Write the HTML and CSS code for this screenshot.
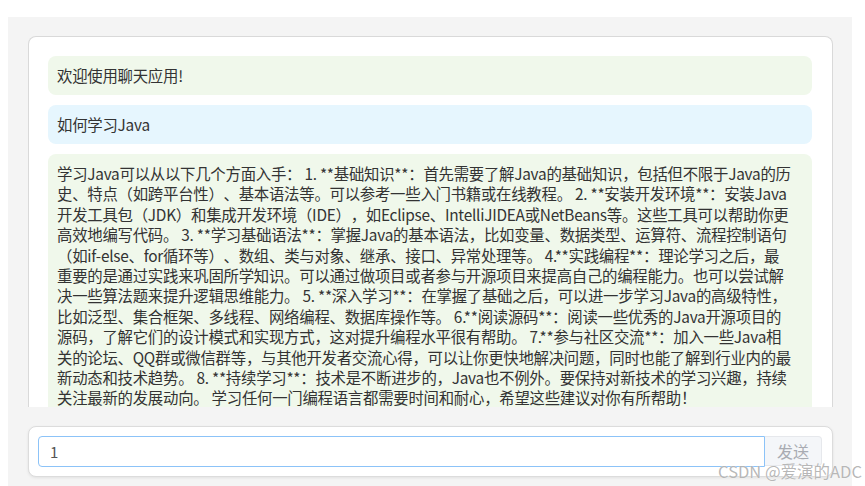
FILE: index.html
```html
<!DOCTYPE html>
<html lang="zh-CN">
<head>
    <meta charset="UTF-8">
    <meta name="viewport" content="width=device-width, initial-scale=1.0">
    <title>聊天应用</title>
    <link rel="stylesheet" href="styles.css">
</head>
<body>
    <div class="app">
        <div class="chat-box">
            <div class="message bot">欢迎使用聊天应用!</div>
            <div class="message user">如何学习Java</div>
            <div class="message bot reply">学习Java可以从以下几个方面入手： 1. **基础知识**：首先需要了解Java的基础知识，包括但不限于Java的历<br>史、特点（如跨平台性）、基本语法等。可以参考一些入门书籍或在线教程。 2. **安装开发环境**：安装Java<br>开发工具包（JDK）和集成开发环境（IDE），如Eclipse、IntelliJIDEA或NetBeans等。这些工具可以帮助你更<br>高效地编写代码。 3. **学习基础语法**：掌握Java的基本语法，比如变量、数据类型、运算符、流程控制语句<br>（如if-else、for循环等）、数组、类与对象、继承、接口、异常处理等。 4.**实践编程**：理论学习之后，最<br>重要的是通过实践来巩固所学知识。可以通过做项目或者参与开源项目来提高自己的编程能力。也可以尝试解<br>决一些算法题来提升逻辑思维能力。 5. **深入学习**：在掌握了基础之后，可以进一步学习Java的高级特性，<br>比如泛型、集合框架、多线程、网络编程、数据库操作等。 6.**阅读源码**：阅读一些优秀的Java开源项目的<br>源码，了解它们的设计模式和实现方式，这对提升编程水平很有帮助。 7.**参与社区交流**：加入一些Java相<br>关的论坛、QQ群或微信群等，与其他开发者交流心得，可以让你更快地解决问题，同时也能了解到行业内的最<br>新动态和技术趋势。 8. **持续学习**：技术是不断进步的，Java也不例外。要保持对新技术的学习兴趣，持续<br>关注最新的发展动向。 学习任何一门编程语言都需要时间和耐心，希望这些建议对你有所帮助！</div>
        </div>
        <form class="input-box" id="chatForm">
            <input type="text" id="msg" value="1">
            <button type="submit">发送</button>
        </form>
    </div>
    <div class="watermark">CSDN @爱演的ADC</div>
</body>
</html>
```
FILE: styles.css
```css
body {
    margin: 0;
    padding: 17px 0 0 8px;
    font-family: "Noto Sans CJK SC", "Microsoft YaHei", sans-serif;
    background: #fff;
    overflow: hidden;
}

.app {
    width: 805px;
    height: 469px;
    background: #f4f4f4;
    padding: 19px 19px 0 20px;
}

.chat-box {
    height: 351px;
    background: #fff;
    border: 1px solid #d9d9d9;
    border-bottom: none;
    border-radius: 8px 8px 0 0;
    padding: 19px 20px 0 19px;
    overflow: hidden;
}

.message {
    padding: 9px 10px 9px 9px;
    margin-bottom: 10px;
    border-radius: 8px;
    font-size: 15.4px;
    line-height: 21px;
    letter-spacing: -0.25px;
    text-spacing-trim: space-all;
    color: #333;
}
.bot {
    background: #f0f8eb;
}
.user {
    background: #e6f6fe;
}
.reply {
    line-height: 20.4px;
    white-space: nowrap;
}

.input-box {
    margin: 19px 0 0 0;
    background: #fff;
    border: 1px solid #dcdcdc;
    border-radius: 8px;
    padding: 9px 10px 9px 9px;
    display: flex;
    box-shadow: 0 1px 3px rgba(0, 0, 0, 0.08);
}

input {
    flex: 1;
    height: 31px;
    box-sizing: border-box;
    padding: 0 11px;
    border: 1px solid #8cc3f8;
    border-radius: 4px 0 0 4px;
    font-size: 15px;
    font-family: "Noto Sans CJK SC", sans-serif;
    color: #555;
    outline: none;
}

button {
    width: 57px;
    height: 30px;
    padding: 0;
    background: #f4f6f9;
    color: #a8abb2;
    border: 1px solid #e6e8ec;
    border-left: none;
    border-radius: 0 4px 4px 0;
    font-size: 16px;
    line-height: 16px;
    font-family: "Noto Sans CJK SC", sans-serif;
    cursor: pointer;
}

.watermark {
    position: absolute;
    right: 3px;
    top: 463px;
    font-size: 16.5px;
    line-height: 17px;
    font-family: "Noto Sans CJK SC", sans-serif;
    color: rgba(160, 160, 160, 0.75);
    text-shadow: 0 0 1px #fff;
}
```
